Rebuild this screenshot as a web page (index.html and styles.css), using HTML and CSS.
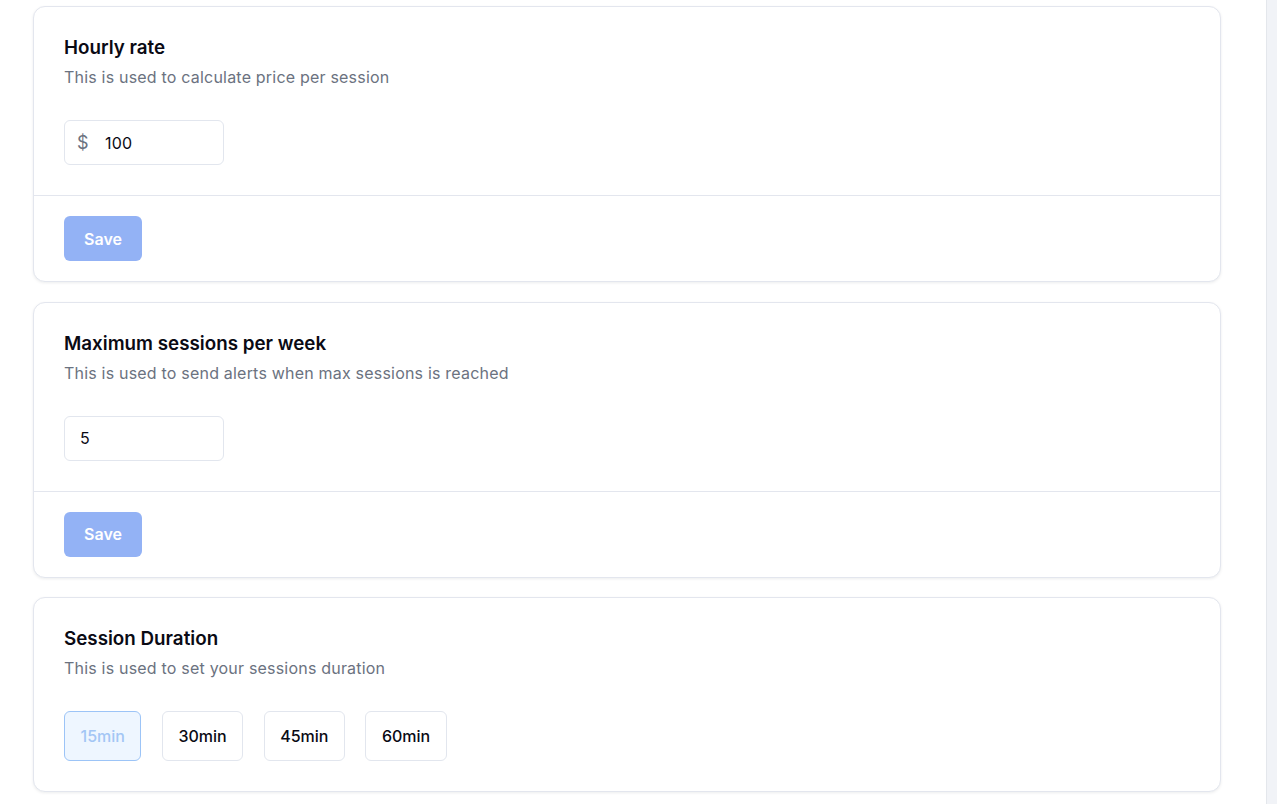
FILE: index.html
```html
<!DOCTYPE html>
<html lang="en">
<head>
<meta charset="utf-8">
<title>Settings</title>
<link rel="stylesheet" href="styles.css">
</head>
<body>
<div class="layout">
  <main class="content">
    <section class="card">
      <div class="card-body">
        <h2 class="card-title">Hourly rate</h2>
        <p class="card-sub">This is used to calculate price per session</p>
        <div class="input-box with-prefix">
          <span class="prefix">$</span>
          <span class="value">100</span>
        </div>
      </div>
      <div class="card-footer">
        <button class="btn-save" type="button">Save</button>
      </div>
    </section>

    <section class="card">
      <div class="card-body">
        <h2 class="card-title">Maximum sessions per week</h2>
        <p class="card-sub">This is used to send alerts when max sessions is reached</p>
        <div class="input-box">
          <span class="value">5</span>
        </div>
      </div>
      <div class="card-footer">
        <button class="btn-save" type="button">Save</button>
      </div>
    </section>

    <section class="card">
      <div class="card-body">
        <h2 class="card-title">Session Duration</h2>
        <p class="card-sub">This is used to set your sessions duration</p>
        <div class="durations">
          <button class="dur active" type="button">15min</button>
          <button class="dur" type="button">30min</button>
          <button class="dur" type="button">45min</button>
          <button class="dur" type="button">60min</button>
        </div>
      </div>
    </section>
  </main>
  <div class="scroll-track"></div>
</div>
</body>
</html>
```

FILE: styles.css
```css
* { box-sizing: border-box; }
html, body { margin: 0; padding: 0; }
body {
  font-family: Inter, "Noto Sans", "Liberation Sans", sans-serif;
  color: #0b0b12;
  background: #ffffff;
}
.layout {
  display: flex;
  height: 804px;
  overflow: hidden;
}
.content {
  flex: 1;
  padding: 6px 45px 0 33px;
  display: flex;
  flex-direction: column;
  gap: 19.5px;
}
.scroll-track {
  width: 11px;
  flex: 0 0 11px;
  background: #f1f3f7;
  border-left: 1px solid #e4e7ec;
}
.card {
  background: #fff;
  border: 1px solid #e3e6ee;
  border-radius: 12px;
  box-shadow: 0 1px 3px rgba(16, 24, 40, 0.08);
}
.card-body {
  padding: 30px;
}
.card-title {
  margin: 0;
  font-size: 18.8px;
  line-height: 22px;
  font-weight: 600;
  color: #0a0a14;
}
.card-sub {
  margin: 7px 0 0;
  font-size: 16px;
  line-height: 22px;
  letter-spacing: 0.2px;
  color: #6b7280;
}
.input-box {
  margin-top: 32px;
  width: 160px;
  height: 45px;
  border: 1px solid #e2e6ee;
  border-radius: 6px;
  display: flex;
  align-items: center;
  padding: 0 15px;
  font-size: 16px;
}
.input-box.with-prefix {
  padding-left: 12px;
}
.prefix {
  color: #6b7280;
  font-size: 18px;
  width: 28px;
}
.value { color: #0a0a14; letter-spacing: 0.2px; }
.card-footer {
  border-top: 1px solid #e3e6ee;
  padding: 20px 30px;
}
.btn-save {
  width: 78px;
  height: 45px;
  border: none;
  border-radius: 6px;
  background: #93b2f5;
  color: #fff;
  font-family: inherit;
  font-size: 16px;
  font-weight: 600;
  padding: 0;
}
.durations {
  margin-top: 32px;
  display: flex;
  gap: 20.5px;
}
.dur {
  height: 50px;
  padding: 0 15.5px;
  border: 1px solid #e2e6ee;
  border-radius: 6px;
  background: #fff;
  font-family: inherit;
  font-size: 16px;
  font-weight: 500;
  color: #0a0a14;
}
.dur.active {
  background: #eef6ff;
  border-color: #9cc4f7;
  color: #a3c6f5;
}
```
